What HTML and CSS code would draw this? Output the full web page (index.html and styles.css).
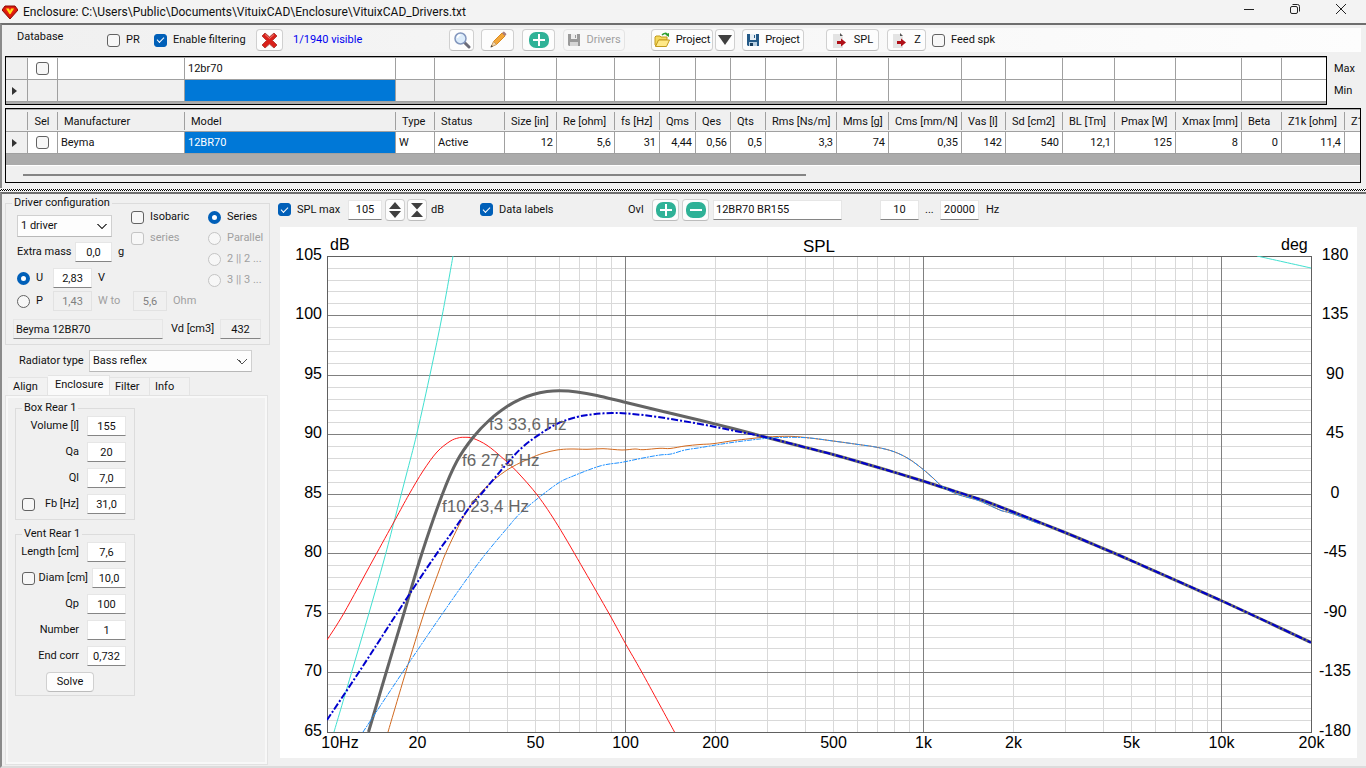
FILE: index.html
```html
<!DOCTYPE html>
<html lang="en">
<head>
  <meta charset="UTF-8" />
  <meta name="viewport" content="width=device-width, initial-scale=1" />
  <title>Enclosure - VituixCAD</title>
  <link rel="stylesheet" href="styles.css">
</head>
<body>
  <header class="titlebar">
    <svg class="logo" width="16" height="14" viewBox="0 0 16 14">
      <path d="M3 1h10l3 4-8 9-8-9z" fill="#d8170c" stroke="#8d0a05" stroke-width="1"/>
      <path d="M4 2.500h8l1.500 2.500L8 11 2.500 5z" fill="#e8230f"/>
      <path d="M4 3.500h3L8 6l1-2.500h3L8.500 9h-1z" fill="#ffe11a"/>
    </svg>
    <h1>Enclosure: C:\Users\Public\Documents\VituixCAD\Enclosure\VituixCAD_Drivers.txt</h1>
    <div class="window-buttons">
      <button type="button" aria-label="Minimize"><svg width="12" height="12" viewBox="0 0 12 12"><path d="M1 6.500h10"/></svg></button>
      <button type="button" aria-label="Restore"><svg width="12" height="12" viewBox="0 0 12 12"><rect x="1.500" y="3.500" width="7" height="7" rx="1.500"/><path d="M3.500 1.500h5a2 2 0 0 1 2 2v5"/></svg></button>
      <button type="button" aria-label="Close"><svg width="12" height="12" viewBox="0 0 12 12"><path d="M1 1l10 10M11 1L1 11"/></svg></button>
    </div>
  </header>

  <section class="database">
    <div class="toolbar">
      <span class="toolbar-title">Database</span>
      <label class="check tb-pr"><input type="checkbox">PR</label>
      <label class="check tb-filter"><input type="checkbox" checked>Enable filtering</label>
      <button type="button" class="btn w27" aria-label="Clear filter">
        <svg width="17" height="17" viewBox="0 0 17 17"><path d="M1 4l3-3 4.500 4L13 1l3 3-4.500 4.500L16 13l-3 3-4.500-4L4 16l-3-3 4.500-4.500z" fill="#d9201a" stroke="#b5443e"/><path d="M4 2.500l4.500 4 4.500-4" fill="none" stroke="#ef7a70"/></svg>
      </button>
      <span class="visible-count">1/1940 visible</span>
      <button type="button" class="btn w25" aria-label="Search">
        <svg width="18" height="18" viewBox="0 0 18 18"><path d="M11 11l5 5" stroke="#6b6b78" stroke-width="3" stroke-linecap="round"/><circle cx="7.500" cy="7.500" r="5.500" fill="#dcecfb" stroke="#8296bd" stroke-width="1.500"/><path d="M4.500 7a3 3 0 0 1 3-3" fill="none" stroke="#fff" stroke-width="1.500"/></svg>
      </button>
      <button type="button" class="btn w33 gap7" aria-label="Edit">
        <svg width="18" height="18" viewBox="0 0 18 18"><path d="M4.500 10.500L13 2l3 3-8.500 8.500z" fill="#f3a73a" stroke="#d98a1f"/><path d="M13 2l1-1a1 1 0 0 1 1.500 0L17 2.500a1 1 0 0 1 0 1.500L16 5z" fill="#a98080"/><path d="M2 16l2.500-5.500 3 3z" fill="#f1d8b0" stroke="#c99a5c"/><path d="M1.500 16.500l1-2.500 1.500 1.500z" fill="#444"/></svg>
      </button>
      <button type="button" class="btn w33 gap8" aria-label="Add">
        <svg width="20" height="18" viewBox="0 0 20 18"><rect y="1" width="20" height="16" rx="7" fill="#2fb297"/><path d="M10 3v12M4 9h12" stroke="#fff" stroke-width="2"/></svg>
      </button>
      <button type="button" class="btn w62 gap8" disabled>
        <svg width="14" height="14" viewBox="0 0 14 14"><path d="M1 1h12v12H2l-1-1z" fill="#9a9a9a"/><path d="M4 1h6v5H4z" fill="#eee"/><path d="M3 9h8v4H3z" fill="#d5d5d5"/><path d="M8 2h1v3H8z" fill="#999"/></svg>
        Drivers
      </button>
      <button type="button" class="btn w62 gap26">
        <svg width="17" height="16" viewBox="0 0 17 16"><path d="M1 5l1-1h4l1 1h6v3H5l-3 6-1-1z" fill="#f5d95c" stroke="#c29a1d"/><path d="M4.500 8h11l-3 6.500H1.500z" fill="#ffe988" stroke="#c29a1d"/><path d="M8 3c2-2 4-2 5-1" fill="none" stroke="#2f9e2f" stroke-width="1.500"/><path d="M11 2.500l4-1.500v4z" fill="#2f9e2f"/></svg>
        Project
      </button>
      <button type="button" class="btn w20 gap2" aria-label="Recent projects">
        <svg width="14" height="12" viewBox="0 0 14 12"><path d="M0 1h14L7 11z" fill="#3f3f3f"/></svg>
      </button>
      <button type="button" class="btn w62 gap7">
        <svg width="14" height="14" viewBox="0 0 14 14"><path d="M1 1h12v12H2l-1-1z" fill="#245a88"/><path d="M4 1h6v6H4z" fill="#e6eff6"/><path d="M3 9h8v4H3z" fill="#b9d0e2"/><path d="M8 2h1v3H8z" fill="#245a88"/><path d="M4 10h3v3H4z" fill="#173c5c"/></svg>
        Project
      </button>
      <button type="button" class="btn w53 gap22">
        <svg width="17" height="17" viewBox="0 0 17 17"><path d="M1 2h7l3 3v11H1z" fill="#e4e4e4"/><path d="M8 1v3h3z" fill="#555"/><path d="M5 9h4V6.500l5 4-5 4V12H5z" fill="#b01018"/></svg>
        SPL
      </button>
      <button type="button" class="btn w39 gap8">
        <svg width="17" height="17" viewBox="0 0 17 17"><path d="M1 2h7l3 3v11H1z" fill="#e4e4e4"/><path d="M8 1v3h3z" fill="#555"/><path d="M5 9h4V6.500l5 4-5 4V12H5z" fill="#b01018"/></svg>
        Z
      </button>
      <label class="check tb-feed"><input type="checkbox">Feed spk</label>
    </div>

    <div class="filter-row">
      <div class="grid-box filter-box">
        <table class="grid">
          <colgroup class="cols"></colgroup>
          <tbody>
            <tr>
              <th></th><td class="center"><input type="checkbox" aria-label="Sel filter"></td><td></td><td>12br70</td><td></td><td></td><td></td><td></td><td></td><td></td><td></td><td></td><td></td><td></td><td></td><td></td><td></td><td></td><td></td><td></td><td></td><td></td><td></td>
            </tr>
            <tr>
              <th class="current"></th><td class="off"></td><td class="off"></td><td class="selected"></td><td class="off"></td><td class="off"></td><td></td><td></td><td></td><td></td><td></td><td></td><td></td><td></td><td></td><td></td><td></td><td></td><td></td><td></td><td></td><td></td><td></td>
            </tr>
          </tbody>
        </table>
      </div>
      <div class="minmax"><span>Max</span><span>Min</span></div>
    </div>

    <div class="grid-box">
      <table class="grid">
        <colgroup class="cols"></colgroup>
        <thead>
          <tr>
            <th></th><th class="center">Sel</th><th>Manufacturer</th><th>Model</th><th>Type</th><th>Status</th><th>Size [in]</th><th>Re [ohm]</th><th>fs [Hz]</th><th>Qms</th><th>Qes</th><th>Qts</th><th>Rms [Ns/m]</th><th>Mms [g]</th><th>Cms [mm/N]</th><th>Vas [l]</th><th>Sd [cm2]</th><th>BL [Tm]</th><th>Pmax [W]</th><th>Xmax [mm]</th><th>Beta</th><th>Z1k [ohm]</th><th>Z1</th>
          </tr>
        </thead>
        <tbody>
          <tr>
            <th class="current"></th><td class="center"><input type="checkbox" aria-label="Select Beyma 12BR70"></td><td>Beyma</td><td class="selected">12BR70</td><td>W</td><td>Active</td><td class="num">12</td><td class="num">5,6</td><td class="num">31</td><td class="num">4,44</td><td class="num">0,56</td><td class="num">0,5</td><td class="num">3,3</td><td class="num">74</td><td class="num">0,35</td><td class="num">142</td><td class="num">540</td><td class="num">12,1</td><td class="num">125</td><td class="num">8</td><td class="num">0</td><td class="num">11,4</td><td></td>
          </tr>
        </tbody>
      </table>
      <div class="scrollbar"><div class="thumb"></div></div>
    </div>
  </section>

  <div class="splitter"></div>

  <main class="workspace">
    <aside class="sidebar">
      <fieldset class="driver-config">
        <legend>Driver configuration</legend>
        <div class="config-grid">
          <select class="driver-count" aria-label="Driver count"><option>1 driver</option></select>
          <div class="option-list checks">
            <label class="check"><input type="checkbox">Isobaric</label>
            <label class="check"><input type="checkbox" disabled>series</label>
          </div>
          <div class="option-list radios">
            <label class="check"><input type="radio" name="wiring" checked>Series</label>
            <label class="check"><input type="radio" name="wiring" disabled>Parallel</label>
            <label class="check"><input type="radio" name="wiring" disabled>2 || 2 ...</label>
            <label class="check"><input type="radio" name="wiring" disabled>3 || 3 ...</label>
          </div>
          <div class="line mass"><label for="mass">Extra mass</label><input type="text" id="mass" class="w37" value="0,0"><span>g</span></div>
          <div class="line power"><label class="check"><input type="radio" name="drive" checked>U</label><input type="text" class="w39" aria-label="Voltage" value="2,83"><span>V</span></div>
          <div class="line power wide"><label class="check"><input type="radio" name="drive">P</label><input type="text" class="w39" aria-label="Power" value="1,43" disabled><label for="ohm" class="dim w-to">W to</label><input type="text" id="ohm" class="w34" value="5,6" disabled><span class="dim">Ohm</span></div>
        </div>
        <div class="line driver-name">
          <input type="text" class="name" aria-label="Driver" value="Beyma 12BR70" readonly>
          <label for="vd">Vd [cm3]</label>
          <input type="text" id="vd" class="vd" value="432" readonly>
        </div>
      </fieldset>

      <div class="radiator">
        <label for="radiator">Radiator type</label>
        <select id="radiator"><option>Bass reflex</option></select>
      </div>

      <nav class="tabs">
        <button type="button">Align</button>
        <button type="button" class="active">Enclosure</button>
        <button type="button">Filter</button>
        <button type="button">Info</button>
      </nav>
      <div class="tab-panel">
        <fieldset class="params">
          <legend>Box Rear 1</legend>
          <div class="param"><label for="volume">Volume [l]</label><input type="text" id="volume" value="155"></div>
          <div class="param"><label for="qa">Qa</label><input type="text" id="qa" value="20"></div>
          <div class="param"><label for="ql">Ql</label><input type="text" id="ql" value="7,0"></div>
          <div class="param"><input type="checkbox" aria-label="Lock Fb"><label for="fb">Fb [Hz]</label><input type="text" id="fb" value="31,0"></div>
        </fieldset>
        <fieldset class="params">
          <legend>Vent Rear 1</legend>
          <div class="param"><label for="length">Length [cm]</label><input type="text" id="length" value="7,6"></div>
          <div class="param narrow"><input type="checkbox" aria-label="Lock Diam"><label for="diam">Diam [cm]</label><input type="text" id="diam" value="10,0"></div>
          <div class="param"><label for="qp">Qp</label><input type="text" id="qp" value="100"></div>
          <div class="param"><label for="number">Number</label><input type="text" id="number" value="1"></div>
          <div class="param"><label for="endcorr">End corr</label><input type="text" id="endcorr" value="0,732"></div>
          <button type="button" class="btn solve">Solve</button>
        </fieldset>
      </div>
    </aside>

    <section class="chart-area">
      <div class="chart-toolbar">
        <label class="check ct-spl"><input type="checkbox" checked>SPL max</label>
        <input type="text" class="w34" aria-label="SPL max" value="105">
        <button type="button" class="btn w20 gap3" aria-label="Expand range"><svg width="14" height="16" viewBox="0 0 14 16"><path d="M7 0l6 7H1zM7 16l6-7H1z" fill="#3f3f3f"/></svg></button>
        <button type="button" class="btn w20 gap2" aria-label="Compress range"><svg width="14" height="16" viewBox="0 0 14 16"><path d="M1 1h12L7 7.500zM1 15h12L7 8.500z" fill="#3f3f3f"/></svg></button>
        <span class="ct-db">dB</span>
        <label class="check ct-labels"><input type="checkbox" checked>Data labels</label>
        <span class="ct-ovl">Ovl</span>
        <button type="button" class="btn w27" aria-label="Add overlay"><svg width="20" height="18" viewBox="0 0 20 18"><rect y="1" width="20" height="16" rx="7" fill="#2fb297"/><path d="M10 3v12M4 9h12" stroke="#fff" stroke-width="2"/></svg></button>
        <button type="button" class="btn w27 gap3" aria-label="Remove overlay"><svg width="20" height="18" viewBox="0 0 20 18"><rect y="1" width="20" height="16" rx="7" fill="#2fb297"/><path d="M4 9h12" stroke="#fff" stroke-width="2"/></svg></button>
        <input type="text" class="overlay-name" aria-label="Overlay name" value="12BR70 BR155">
        <input type="text" class="w39 gap38" aria-label="From frequency" value="10">
        <span class="dots">...</span>
        <input type="text" class="w39" aria-label="To frequency" value="20000">
        <span class="hz">Hz</span>
      </div>
      <svg class="chart" id="chart" viewBox="280 227 1077 531">
        <clipPath id="plot"><rect x="327" y="256" width="984" height="476"/></clipPath>
        <g id="grid"></g>
        <g id="curves" clip-path="url(#plot)"></g>
        <g class="data-labels">
          <text x="489" y="430">f3 33,6 Hz</text>
          <text x="462" y="466">f6 27,5 Hz</text>
          <text x="442" y="512">f10 23,4 Hz</text>
        </g>
        <text class="chart-title" x="819" y="252">SPL</text>
        <text x="330" y="250">dB</text>
        <text x="1281" y="250">deg</text>
      </svg>
    </section>
  </main>

  <script>
    // column widths are shared by the filter grid and the driver grid
    const widths = [22, 30, 127, 211, 39, 70, 52, 58, 45, 36, 35, 35, 71, 52, 73, 44, 57, 52, 61, 66, 40, 63, 60];
    document.querySelectorAll(".cols").forEach((group) => {
      widths.forEach((w) => {
        const col = document.createElement("col");
        col.style.width = w + "px";
        group.appendChild(col);
      });
    });

    const NS = "http://www.w3.org/2000/svg";
    const left = 327.5, right = 1311.5, top_ = 256.5, bottom = 732.5;
    const grid = document.getElementById("grid");
    const curves = document.getElementById("curves");

    function add(parent, tag, attrs, text) {
      const el = document.createElementNS(NS, tag);
      for (const key in attrs) el.setAttribute(key, attrs[key]);
      if (text !== undefined) el.textContent = text;
      parent.appendChild(el);
    }

    const freqX = (f) => Math.floor(327.6 + 298 * Math.log10(f / 10)) + 0.5;
    const splY = (db) => Math.floor(256.2 + (105 - db) * 11.9) + 0.5;

    function vline(x, cls) { add(grid, "path", { d: `M${x} ${top_}V${bottom}`, class: cls }); }
    function hline(y, cls) { add(grid, "path", { d: `M${left} ${y}H${right}`, class: cls }); }

    // minor lines first, so the major ones stay on top
    for (let dec = 10; dec <= 10000; dec *= 10) {
      for (let n = 2; n < 10 && n * dec < 20000; n++) vline(freqX(n * dec), "minor");
    }
    for (let db = 66; db < 105; db++) if (db % 5) hline(splY(db), "minor");
    [100, 1000, 10000].forEach((f) => vline(freqX(f), "major"));
    for (let db = 70; db < 105; db += 5) hline(splY(db), "major");
    add(grid, "rect", { x: left, y: top_, width: right - left, height: bottom - top_, class: "frame" });

    for (let db = 65; db <= 105; db += 5) {
      add(grid, "text", { x: 322, y: splY(db) + 3.5, class: "end" }, db);
      add(grid, "text", { x: 1335, y: splY(db) + 3.5, class: "mid" }, (db - 85) * 9);
    }
    const freqLabels = { 20: "20", 50: "50", 100: "100", 200: "200", 500: "500", 1000: "1k", 2000: "2k", 5000: "5k", 10000: "10k", 20000: "20k" };
    add(grid, "text", { x: 340, y: 748, class: "mid" }, "10Hz");
    for (const f in freqLabels) add(grid, "text", { x: freqX(f), y: 748, class: "mid" }, freqLabels[f]);

    // Catmull-Rom spline through the points
    function spline(p) {
      let d = `M${p[0]}`;
      for (let i = 0; i < p.length - 1; i++) {
        const a = p[i - 1] || p[i], b = p[i], c = p[i + 1], e = p[i + 2] || c;
        d += `C${b[0] + (c[0] - a[0]) / 6} ${b[1] + (c[1] - a[1]) / 6} ${c[0] - (e[0] - b[0]) / 6} ${c[1] - (e[1] - b[1]) / 6} ${c[0]} ${c[1]}`;
      }
      return d;
    }

    const tail = [[767, 437.5], [800, 446], [833, 454.5], [880, 468], [923, 481], [943, 487.5], [979, 499], [1012, 511.5], [1065, 532.5], [1102, 548], [1131, 560.5], [1221, 600.5], [1311, 642.5]];
    const rolloff = [[810, 438], [833, 441], [857, 444.3], [877, 447.3], [894, 451.7], [909, 459], [923, 469.3], [933, 478], [943, 487], [958, 494.5], [977, 500], [990, 505.5], [1001, 510.5], [1012, 513.5], [1040, 524]];

    const series = [
      ["phase", [[334, 732], [351.7, 672], [369, 613], [384, 560], [394.5, 520], [406, 476], [417, 433], [431, 370], [442.3, 315], [453, 256]]],
      ["phase", [[1257, 256], [1284, 262], [1311, 268]]],
      ["excursion", [[327, 640], [344, 613], [373, 560], [395, 520], [409, 494.5], [423, 471], [437, 452], [450, 441.3], [458, 438], [464, 437.3], [473, 438.3], [487, 445.3], [502, 457.5], [517, 471.7], [538, 496], [558, 525.7], [584, 570], [609, 613.5], [626, 644.5], [642, 672.5], [674.5, 732]]],
      ["port", [[388, 732], [405.7, 672.3], [424, 613.3], [439.3, 570], [446.7, 551], [461.7, 520], [473.3, 501.7], [483.3, 490], [497, 477.3], [512, 467], [530, 458.3], [543, 453.3], [557, 450], [570, 449], [587, 449.3], [603, 448.7], [622, 450], [635, 449], [643, 449.7], [660, 448.3], [670, 448.5], [685, 446], [700, 444.5], [713, 443.7], [733, 440.7], [750, 438.7], [767, 437], [790, 436.3], ...rolloff]],
      ["response", [[368.5, 732], [386.3, 672], [404.3, 612], [422, 553], [442.5, 494], [457, 461], [473, 437.5], [490, 419.5], [507, 406.5], [520, 399.3], [533, 394.5], [547, 391.6], [560, 390.8], [577, 392], [597, 395.5], [625, 402.3], [660, 410.7], [700, 420.3], [733, 428.5], ...tail]],
      ["port-max", [[363, 732], [403, 671.7], [442.7, 613.3], [473.3, 570], [490, 548.5], [507, 528.3], [520, 513.5], [540, 496.7], [558, 483.3], [570, 477.3], [600, 466], [622, 462.3], [643, 458], [660, 455], [671, 454], [685, 450], [700, 447.7], [720, 444.3], [743, 441], [767, 438.3], [788, 437.3], ...rolloff]],
      ["max-spl", [[327, 720], [359, 672], [405, 601], [433, 559], [453, 531], [470, 506.7], [482, 493], [508, 462.3], [523, 446.7], [540, 434], [558, 423.3], [577, 417], [593, 414.3], [612, 413], [630, 413.7], [660, 417.3], [700, 424], [733, 430.5], ...tail]]
    ];
    series.forEach(([cls, points]) => add(curves, "path", { d: spline(points), class: cls }));
  </script>
</body>
</html>
```
FILE: styles.css
```css
:root {
  --face: #f0f0f0;
  --text: #111;
  --dim: #a0a0a0;
  --line: #a0a0a0;
  --group: #dcdcdc;
  --accent: #005fb8;
  --select: #0078d7;
}

* {
  box-sizing: border-box;
}

body {
  margin: 0;
  min-height: 100vh;
  display: flex;
  flex-direction: column;
  background: var(--face);
  color: var(--text);
  font-family: Roboto, sans-serif;
  font-size: 11px;
  line-height: 16px;
  white-space: nowrap;
  overflow-x: hidden;
}

button,
input,
select {
  font: inherit;
  color: inherit;
  margin: 0;
}

/* title bar */
.titlebar {
  height: 23px;
  display: flex;
  align-items: center;
  background: #f3f3f3;
  padding: 0 2px;
}

.titlebar h1 {
  flex: 1;
  margin: 0 0 0 5px;
  font-size: 12px;
  font-weight: 400;
}

.window-buttons {
  display: flex;
}

.window-buttons button {
  width: 46px;
  height: 20px;
  padding: 0;
  border: 0;
  background: none;
}

.window-buttons svg {
  fill: none;
  stroke: #222;
}

/* database panel */
.database {
  border-top: 2px solid #6e6e6e;
  border-left: 2px solid #8a8a8a;
  padding: 3px 5px 5px 3px;
}

.toolbar {
  display: flex;
  align-items: center;
  height: 24px;
  margin: 0 0 4px;
  padding-left: 12px;
  background: linear-gradient(90deg, #f0f0f0, #fdfdfd);
}

.toolbar-title {
  width: 90px;
  padding-bottom: 6px;
}

.check {
  flex: none;
  display: flex;
  align-items: center;
  gap: 6px;
}

.tb-pr {
  width: 47px;
}

.tb-filter {
  width: 102px;
}

.tb-feed {
  margin-left: 6px;
}

.visible-count {
  width: 166px;
  padding-left: 10px;
  color: #0000f0;
}

input[type="checkbox"],
input[type="radio"] {
  appearance: none;
  flex: none;
  width: 13px;
  height: 13px;
  border: 1px solid #626262;
  border-radius: 3px;
  background: #f7f7f7;
  display: grid;
  place-items: center;
}

input[type="radio"] {
  border-radius: 50%;
}

input[type="checkbox"]:checked {
  background: var(--accent);
  border-color: var(--accent);
}

input[type="checkbox"]:checked::after {
  content: "";
  width: 6px;
  height: 3px;
  border: solid #fff;
  border-width: 0 0 1px 1px;
  transform: rotate(-45deg);
  margin-bottom: 2px;
}

input[type="radio"]:checked {
  border: 4px solid var(--accent);
  background: #fff;
}

input:disabled {
  border-color: #c4c4c4;
}

.check:has(input:disabled),
.dim {
  color: var(--dim);
}

.btn {
  flex: none;
  height: 22px;
  padding: 0;
  display: flex;
  align-items: center;
  justify-content: center;
  gap: 5px;
  border: 1px solid #d0d0d0;
  border-bottom-color: #bcbcbc;
  border-radius: 4px;
  background: #fdfdfd;
}

.btn:disabled {
  color: #a0a0a0;
  border-color: #e4e4e4;
  background: #f7f7f7;
}

.w20 { width: 20px; }
.w25 { width: 25px; }
.w27 { width: 27px; }
.w33 { width: 33px; }
.w34 { width: 34px; }
.w37 { width: 37px; }
.w39 { width: 39px; }
.w53 { width: 53px; }
.w62 { width: 62px; }
.gap2 { margin-left: 2px; }
.gap3 { margin-left: 3px; }
.gap7 { margin-left: 7px; }
.gap8 { margin-left: 8px; }
.gap22 { margin-left: 22px; }
.gap26 { margin-left: 26px; }
.gap38 { margin-left: 38px; }

/* data grids */
.filter-row {
  display: flex;
  margin-bottom: 3px;
}

.grid-box {
  border: 1px solid #000;
  background: #ababab;
  overflow: hidden;
  padding-top: 1px;
}

.filter-box {
  flex: 1;
  padding-bottom: 2px;
}

.minmax {
  width: 34px;
  padding: 2px 0 0 7px;
}

.minmax span {
  display: block;
  line-height: 22px;
}

.grid {
  table-layout: fixed;
  width: 1399px;
  border-collapse: separate;
  border-spacing: 0;
}

.grid th,
.grid td {
  height: 22px;
  padding: 0 3px;
  border: solid var(--line);
  border-width: 0 1px 1px 0;
  background: #fff;
  font-weight: 400;
  text-align: left;
  overflow: hidden;
}

.grid th {
  background: var(--face);
}

.grid thead th {
  padding: 2px 0 0 6px;
  border-right: 0;
  background: linear-gradient(#a0a0a0, #a0a0a0) right 2px / 1px 18px no-repeat var(--face);
}

.grid td.num {
  text-align: right;
}

.grid .center,
.grid thead .center {
  padding-left: 0;
  padding-right: 2px;
  text-align: center;
}

.grid td.center {
  padding-right: 0;
}

.grid td.center input {
  margin: 0 auto;
}

.grid td.off {
  background: var(--face);
}

.grid td.selected {
  background: var(--select);
  color: #fff;
}

.grid th.current {
  padding-left: 6px;
}

.grid th.current::before {
  content: "";
  display: block;
  width: 0;
  border: solid transparent;
  border-width: 4px 0 4px 5px;
  border-left-color: #333;
}

.scrollbar {
  height: 17px;
  margin-top: 11px;
  padding: 8px 0 0 17px;
  border-top: 1px solid #fff;
  background: var(--face);
}

.thumb {
  width: 783px;
  height: 2px;
  background: #858585;
}

.splitter {
  height: 4px;
  background: repeating-conic-gradient(#000 0 25%, #fff 0 50%) 0 0 / 2px 2px content-box;
  padding: 1px 0;
}

/* lower half */
.workspace {
  flex: 1;
  display: flex;
  border-top: 2px solid #6e6e6e;
  border-left: 2px solid #8a8a8a;
  border-bottom: 2px solid #dcdcdc;
}

.sidebar {
  flex: none;
  width: 269px;
  padding: 3px 0 1px 3px;
  display: flex;
  flex-direction: column;
}

fieldset {
  min-width: 0;
  margin: 0;
  padding: 0;
  border: 1px solid var(--group);
}

legend {
  margin-left: 6px;
  padding: 0 2px;
  line-height: 12px;
}

input[type="text"] {
  flex: none;
  height: 20px;
  padding: 0;
  border: 1px solid #e6e6e6;
  border-bottom-color: #858585;
  background: #fff;
  text-align: center;
}

input[type="text"]:disabled {
  border-color: #e2e2e2;
  background: #f0f0f0;
  color: #808080;
}

input[type="text"]:read-only:not(:disabled) {
  background: #f0f0f0;
}

select {
  appearance: none;
  height: 22px;
  padding: 0 20px 0 3px;
  border: 1px solid #d0d0d0;
  border-bottom-color: #b8b8b8;
  border-radius: 0;
  background: #fdfdfd;
  background-image: linear-gradient(45deg, transparent 46%, #555 46% 60%, transparent 60%), linear-gradient(-45deg, transparent 46%, #555 46% 60%, transparent 60%);
  background-position: right 9px center, right 4px center;
  background-size: 5px 5px;
  background-repeat: no-repeat;
}

.driver-config {
  margin-right: 1px;
}

.line {
  display: flex;
  align-items: center;
}

.config-grid {
  display: grid;
  grid-template-columns: 114px 77px 1fr;
  grid-template-rows: 28px 30px 22px 24px;
  align-items: center;
  padding-left: 11px;
}

.driver-count {
  width: 95px;
  align-self: end;
}

.option-list {
  display: grid;
  gap: 5px;
  align-self: start;
}

.checks {
  grid-area: 1 / 2 / 3 / 3;
}

.radios {
  grid-area: 1 / 3 / 5 / 4;
}

.mass {
  grid-area: 2 / 1;
}

.mass label {
  width: 58px;
}

.mass span {
  margin-left: 6px;
}

.power {
  grid-column: 1;
}

.power .check {
  width: 36px;
}

.power span {
  margin-left: 6px;
}

.wide {
  grid-column: 1 / 3;
}

.w-to {
  width: 41px;
  padding-left: 6px;
}

.driver-name {
  margin-top: 6px;
  padding: 0 8px 5px 7px;
}

.driver-name label {
  flex: 1;
  padding-left: 8px;
}

.driver-name .name {
  width: 150px;
  padding-left: 2px;
  text-align: left;
}

.driver-name .vd {
  width: 41px;
}

.radiator {
  display: flex;
  align-items: center;
  margin: 5px 0 3px;
  padding-left: 14px;
}

.radiator label {
  width: 70px;
}

.radiator select {
  width: 163px;
}

.tabs {
  display: flex;
  align-items: flex-end;
  padding-left: 3px;
}

.tabs button {
  height: 18px;
  padding: 0 4px 0 5px;
  text-align: left;
  border: 1px solid #e4e4e4;
  border-width: 1px 1px 0 0;
  background: #f2f2f2;
  width: 40px;
}

.tabs button.active {
  width: 62px;
  height: 20px;
  padding: 0 0 2px 7px;
  background: #fafafa;
}

.tab-panel {
  flex: 1;
  border: 1px solid #e2e2e2;
  padding: 6px 0 0 9px;
  margin-right: 3px;
  box-shadow: inset 0 0 0 2px #f8f8f8;
}

.params {
  width: 120px;
  margin-bottom: 8px;
  padding: 0 8px 3px 4px;
}

.params legend {
  margin-left: 2px;
}

.param {
  display: flex;
  align-items: center;
  height: 24px;
  margin-bottom: 2px;
}

.param:last-of-type {
  margin-bottom: 0;
}

.param input[type="checkbox"] {
  margin-left: 2px;
}

.param label {
  flex: 1;
  text-align: right;
  padding-right: 8px;
}

.param input[type="text"] {
  width: 39px;
}

.param.narrow label {
  padding-right: 4px;
}

.param.narrow input[type="text"] {
  width: 34px;
}

.solve {
  width: 48px;
  height: 20px;
  margin: 4px 0 0 26px;
}

/* chart */
.chart-area {
  flex: 1;
  min-width: 0;
  padding: 0 9px 0 9px;
}

.chart-toolbar {
  display: flex;
  align-items: center;
  height: 31px;
  margin: 0 0 2px -2px;
}

.ct-spl {
  width: 70px;
}

.ct-db {
  width: 53px;
  padding-left: 4px;
}

.ct-labels {
  width: 148px;
}

.ct-ovl {
  width: 24px;
}

.overlay-name {
  width: 129px;
  margin-left: 4px;
}

.chart-toolbar .overlay-name {
  padding-left: 2px;
  text-align: left;
}

.dots {
  width: 21px;
  padding-left: 6px;
}

.hz {
  padding-left: 7px;
}

.chart {
  display: block;
  width: 100%;
  height: auto;
  background: #fff;
}

.chart text {
  font-family: "Liberation Sans", sans-serif;
  font-size: 16px;
  fill: #000;
}

.chart .end {
  text-anchor: end;
}

.chart .mid,
.chart .chart-title {
  text-anchor: middle;
}

.chart .chart-title {
  font-size: 17px;
}

.chart .data-labels text {
  font-size: 17px;
  fill: #666;
}

.chart path,
.chart .frame {
  fill: none;
}

.minor { stroke: #d9d9d9; }
.major { stroke: #808080; }
.frame { stroke: #606060; }
.phase { stroke: #40e0d0; }
.excursion { stroke: #ff1a1a; }
.port { stroke: #d2691e; }
.response { stroke: #646464; stroke-width: 3; }

.port-max {
  stroke: #1e90ff;
  stroke-dasharray: 5 1 2 1;
}

.max-spl {
  stroke: #0000cd;
  stroke-width: 2;
  stroke-dasharray: 7 2 2 2;
}
```
